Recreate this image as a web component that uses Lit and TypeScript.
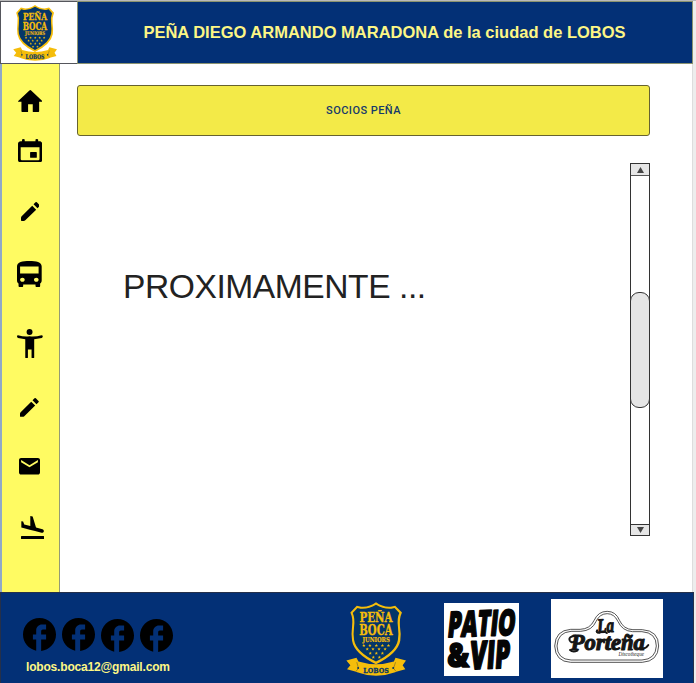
import { LitElement, html, svg, css } from "lit";
import { customElement } from "lit/decorators.js";

interface Icon {
  gap: number;
  left: number;
  w: number;
  h: number;
  box: string;
  d: string;
}

const PENCIL =
  "M0 48Q0 45 2 43L34 11L46 23L13 55Q11 57 8 57H2Q0 57 0 55ZM38 7L44 1Q46 -1 48 1L56 9Q58 11 56 13L50 19Z";

/* gap: free space above the icon, left: distance from the bar's left edge */
const ICONS: Icon[] = [
  { gap: 26, left: 17.7, w: 24.6, h: 22, box: "2 3 20 17", d: "M10.2 19.6v-5.6h3.8v5.6q0 .4.4.4h4.2q.6 0 .6-.6V12h2.4q.6 0 .2-.5L12.7 3.3q-.7-.6-1.4 0L2.2 11.5q-.4.5.2.5H4.8v7.4q0 .6.6.6h4.4q.4 0 .4-.4z" },
  { gap: 26.6, left: 17.8, w: 24.2, h: 23.5, box: "3 1 18 20", d: "M17 12.5q0-.5-.5-.5h-4q-.5 0-.5.5v4q0 .5.5.5h4q.5 0 .5-.5zM16 1.7v1.3H8V1.7Q8 1 7 1T6 1.7v1.3H5c-1.11 0-1.99.9-1.99 2L3 19c0 1.1.89 2 2 2h14c1.1 0 2-.9 2-2V5c0-1.1-.9-2-2-2h-1V1.7Q18 1 17 1T16 1.7zm3 16.6q0 .7-.7.7H5.7q-.7 0-.7-.7V8h14z" },
  { gap: 39.7, left: 20.6, w: 18.8, h: 19, box: "0 0 57 57", d: PENCIL },
  { gap: 39.9, left: 17.4, w: 24.7, h: 26.4, box: "4 2 16 19", d: "M4 16c0 .88.39 1.67 1 2.22V20c0 .55.45 1 1 1h1c.55 0 1-.45 1-1v-1h8v1c0 .55.45 1 1 1h1c.55 0 1-.45 1-1v-1.78c.61-.55 1-1.34 1-2.22V6c0-3.5-3.58-4-8-4s-8 .5-8 4v10zm3.5 1c-.83 0-1.5-.67-1.5-1.5S6.67 14 7.5 14s1.5.67 1.5 1.5S8.33 17 7.5 17zm9 0c-.83 0-1.5-.67-1.5-1.5s.67-1.5 1.5-1.5 1.5.67 1.5 1.5-.67 1.5-1.5 1.5zm1.5-6H6V6h12v5z" },
  { gap: 41.6, left: 17, w: 25.8, h: 29.7, box: "51 85 78 90", d: "M80 94a9 9 0 1 0 18 0a9 9 0 1 0-18 0ZM54 104Q72 109 89 107Q107 109 125 104Q129 104 129 108Q129 111 126 112L103 116V171Q103 175 99 175Q95 175 95 171V147H84V171Q84 175 80 175Q76 175 76 171V116L54 112Q51 111 51 108Q51 104 54 104Z" },
  { gap: 40, left: 20.3, w: 18.8, h: 18.8, box: "0 0 57 57", d: PENCIL },
  { gap: 41.3, left: 19.2, w: 21, h: 16.6, box: "2 4 20 16", d: "M20 4H4c-1.1 0-1.99.9-1.99 2L2 18c0 1.1.9 2 2 2h16c1.1 0 2-.9 2-2V6c0-1.1-.9-2-2-2zm0 4l-8 5-8-5V6l8 5 8-5v2z" },
  { gap: 41.2, left: 20.8, w: 23.2, h: 23, box: "2.5 2 19 19", d: "M3 18.6h18q.5 0 .5.5v1.4q0 .5-.5.5H3q-.5 0-.5-.5v-1.4q0-.5.5-.5zM9.68 13.27l4.35 1.16 5.31 1.42c.8.21 1.62-.26 1.84-1.06.21-.8-.26-1.62-1.06-1.84l-5.31-1.42-2.76-9.02L10.12 2v8.28L5.15 8.95l-.93-2.32-1.45-.39v5.17l1.6.43 5.31 1.43z" },
];

const STARS = [
  [103, 182], [121, 182], [140, 182], [158, 182], [176, 182],
  [113, 193], [130, 193], [148, 193], [166, 193],
  [122, 205], [140, 205], [158, 205],
  [131, 217], [149, 217],
];

const crest = () => svg`
  <svg class="crest" viewBox="50 50 178 223" preserveAspectRatio="none">
    <path d="M139 54Q119 69 95 67L82 64L63 84Q71 101 68 125Q65 149 68 168Q74 206 139 238Q204 206 211 168Q214 149 210 125Q208 101 216 84L196 64L183 67Q159 69 139 54Z" fill="#f5bd0b"/>
    <path d="M139 61Q117 75 93 73L84 71L70 86Q77 102 74 126Q71 149 74 166Q80 201 139 230Q198 201 204 166Q207 149 204 126Q201 102 208 86L194 71L185 73Q161 75 139 61Z" fill="#043668"/>
    <g class="slab">
      <text x="90" y="113" font-size="36" textLength="98" lengthAdjust="spacingAndGlyphs">PEÑA</text>
      <text x="89" y="150" font-size="42" textLength="99" lengthAdjust="spacingAndGlyphs">BOCA</text>
      <text class="thin" x="99" y="171" font-size="20" textLength="81" lengthAdjust="spacingAndGlyphs">JUNIORS</text>
    </g>
    ${STARS.map(([x, y]) => svg`<path transform="translate(${x} ${y})" d="M0-5L1.4-1.5L5-1.5L2.2.8L3.2 4.5L0 2.3L-3.2 4.5L-2.2.8L-5-1.5L-1.4-1.5Z" fill="#f5bd0b"/>`)}
    <path d="M51 227L81 219L87 230Q139 246 192 230L197 219L228 227L218 241L226 253L199 260L196 262Q139 283 83 262L80 260L53 253L63 241Z" fill="#f5bd0b"/>
    <path d="M82 232L87 250L80 259M197 232L191 250L198 259" fill="none" stroke="#7d6a22" stroke-width="2"/>
    <text class="ribbon" x="101" y="264" font-size="24" textLength="76" lengthAdjust="spacingAndGlyphs">LOBOS</text>
    <circle cx="86" cy="249" r="3" fill="#043668"/>
    <circle cx="190" cy="249" r="3" fill="#043668"/>
  </svg>`;

@customElement("app-root")
export class AppRoot extends LitElement {
  static styles = css`
    :host {
      display: flex;
      flex-direction: column;
      box-sizing: border-box;
      width: 696px;
      height: 683px;
      overflow: hidden;
      background: linear-gradient(90deg, #fff 692px, #ddd 692px, #ddd 693px, #ededed 693px);
      font-family: "Liberation Sans", Arial, sans-serif;
    }
    * { box-sizing: border-box; }
    svg { display: block; flex: none; }
    .top {
      display: flex;
      height: 64px;
      flex: none;
      border-top: 1px solid #b9b9b9;
    }
    .badge {
      width: 77px;
      border: 1px solid #55565c;
      border-right: 0;
      padding: 2px 0 0 12px;
      background: #fff;
    }
    .badge .crest { width: 44px; height: 57px; }
    .title {
      width: 616px;
      border: 1px solid #8b9370;
      background: #033076;
      color: #fdf685;
      font-size: 16.5px;
      font-weight: 700;
      line-height: 60px;
      text-align: center;
      white-space: nowrap;
      padding-right: 1px;
    }
    .middle { display: flex; height: 528px; flex: none; }
    .side {
      width: 60px;
      border-left: 2px solid #91a9c9;
      border-right: 1px solid #959b74;
      background: #fffb62;
    }
    .side svg { margin-left: -2px; }
    .main { width: 632px; padding: 21px 0 0 17px; }
    .banner {
      width: 573px;
      height: 51px;
      border: 1px solid #66622f;
      border-radius: 3px;
      background: #f3ea48;
      color: #173a6a;
      font: 500 11px/50px Roboto, sans-serif;
      text-align: center;
      letter-spacing: 0.45px;
    }
    .body { display: flex; justify-content: space-between; width: 573px; padding-top: 27px; }
    .soon {
      padding: 104px 0 0 46px;
      font-size: 33.6px;
      line-height: 40px;
      letter-spacing: -0.44px;
      color: #222;
      white-space: nowrap;
    }
    .bar {
      display: flex;
      flex-direction: column;
      width: 20px;
      height: 373px;
      border: 1px solid #333;
      background: #fff;
    }
    .arrow {
      height: 12px;
      display: flex;
      align-items: center;
      justify-content: center;
      background: #e6e6e6;
      border-bottom: 1px solid #555;
      flex: none;
    }
    .arrow.down { height: 11px; border-bottom: 0; border-top: 1px solid #333; margin-top: auto; }
    .thumb {
      height: 116px;
      margin: 116px -1px 0;
      border: 1px solid #333;
      border-radius: 9px;
      background: #e5e5e5;
    }
    .foot {
      display: flex;
      width: 694px;
      height: 91px;
      flex: none;
      border: 1px solid #25304a;
      border-bottom: 0;
      background: #033076;
    }
    .contact { width: 345px; padding-left: 22px; }
    .social { display: flex; gap: 6px; padding-top: 25px; }
    .social svg:nth-child(n + 3) { margin-top: 1px; }
    .mail {
      padding: 8px 0 0 3px;
      font-size: 12px;
      font-weight: 700;
      line-height: 14px;
      letter-spacing: -0.18px;
      color: #fdf685;
    }
    .foot .crest { width: 60px; height: 75px; margin-top: 8px; }
    .patio { margin: 10px 0 0 38px; width: 75px; height: 73px; background: #fff; }
    .portena { margin: 6px 0 0 32px; width: 112px; height: 79px; background: #fff; }
    .slab { font-family: "DejaVu Serif", serif; font-weight: 700; fill: #f5bd0b; stroke: #f5bd0b; stroke-width: 1; }
    .thin { stroke-width: 0.6; }
    .ribbon { font-family: "DejaVu Serif", serif; font-weight: 700; fill: #043668; stroke: #043668; stroke-width: 0.8; }
    .comic { font-family: "Open Sans", sans-serif; font-weight: 800; fill: #050505; stroke: #050505; stroke-width: 5; stroke-linejoin: round; }
    .script { font-family: "Liberation Serif", serif; font-style: italic; font-weight: 700; fill: #161616; stroke: #161616; stroke-width: 3.4; stroke-linejoin: round; }
    .tiny { font-family: "Liberation Serif", serif; font-style: italic; fill: #222; }
  `;

  render() {
    return html`
      <header class="top">
        <div class="badge">${crest()}</div>
        <div class="title">PEÑA DIEGO ARMANDO MARADONA de la ciudad de LOBOS</div>
      </header>
      <div class="middle">
        <nav class="side">
          ${ICONS.map(
            (i) => html`<div style="padding:${i.gap}px 0 0 ${i.left}px">
              <svg width=${i.w} height=${i.h} viewBox=${i.box} preserveAspectRatio="none"><path d=${i.d} /></svg>
            </div>`
          )}
        </nav>
        <main class="main">
          <div class="banner">SOCIOS PEÑA</div>
          <div class="body">
            <div class="soon">PROXIMAMENTE ...</div>
            <div class="bar">
              <div class="arrow"><svg width="7" height="6" viewBox="0 0 7 6"><path d="M3.5 0L7 6H0Z" fill="#444" /></svg></div>
              <div class="thumb"></div>
              <div class="arrow down"><svg width="7" height="6" viewBox="0 0 7 6"><path d="M3.5 6L7 0H0Z" fill="#444" /></svg></div>
            </div>
          </div>
        </main>
      </div>
      <footer class="foot">
        <div class="contact">
          <div class="social">
            ${[0, 1, 2, 3].map(
              () => html`<svg width="33" height="33" viewBox="2 2 20 20"><path d="M22 12c0-5.52-4.48-10-10-10S2 6.48 2 12c0 4.84 3.44 8.87 8 9.8V15H8v-3h2V9.5C10 7.57 11.57 6 13.5 6H16v3h-2c-.55 0-1 .45-1 1v2h3v3h-3v6.95c5.05-.5 9-4.76 9-9.95z" /></svg>`
            )}
          </div>
          <div class="mail">lobos.boca12@gmail.com</div>
        </div>
        ${crest()}
        <svg class="patio" viewBox="42 37 225 218" preserveAspectRatio="none">
          <g class="comic">
            <text transform="translate(50 139) rotate(-2) skewX(-8)" font-size="106" textLength="204" lengthAdjust="spacingAndGlyphs">PATIO</text>
            <text transform="translate(52 228)" font-size="98" textLength="66" lengthAdjust="spacingAndGlyphs">&amp;</text>
            <text transform="translate(118 235) rotate(-2) skewX(-6)" font-size="116" textLength="120" lengthAdjust="spacingAndGlyphs">VIP</text>
          </g>
        </svg>
        <svg class="portena" viewBox="33 27 335 237" preserveAspectRatio="none">
          <g fill="none" stroke="#333">
            <path stroke-width="2.5" d="M92 118H120Q150 117 162 91Q174 64 201 64Q227 64 238 91Q250 118 278 119H306Q355 122 355 168Q353 214 306 217H92Q46 215 44 168Q46 121 92 118Z" />
            <path stroke-width="2.5" d="M93 124H122Q156 122 168 94Q179 71 201 71Q222 71 233 94Q246 123 277 125H305Q348 128 348 168Q346 208 305 210H93Q52 208 51 168Q53 127 93 124Z" />
            <path stroke="#161616" stroke-width="6" stroke-linecap="round" d="M107 137Q84 139 89 151Q93 160 103 155M90 180Q98 188 112 182M306 174Q315 178 324 165M171 121Q166 128 178 128Q190 120 200 129" />
          </g>
          <g class="script">
            <text transform="translate(172 128) rotate(-3)" font-size="60" textLength="50" lengthAdjust="spacingAndGlyphs">La</text>
            <text transform="translate(92 180)" font-size="68" textLength="222" lengthAdjust="spacingAndGlyphs">Porteña</text>
          </g>
          <text class="tiny" x="235" y="199" font-size="17" textLength="76" lengthAdjust="spacingAndGlyphs">Discotheque</text>
        </svg>
      </footer>
    `;
  }
}
